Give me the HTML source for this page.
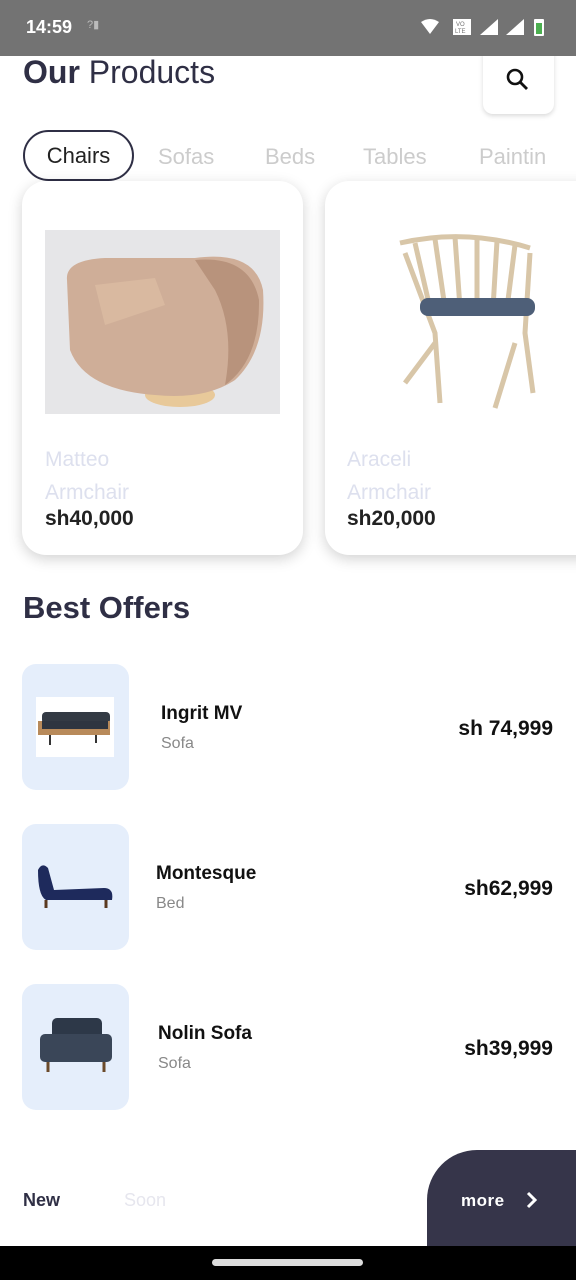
<!DOCTYPE html>
<html><head><meta charset="utf-8"><style>
*{margin:0;padding:0;box-sizing:border-box}
body{width:576px;height:1280px;overflow:hidden;background:#fff;font-family:"Liberation Sans",sans-serif;position:relative;color:#2f2f45}
.abs{position:absolute}
.status{left:0;top:0;width:576px;height:56px;background:#737373;color:#fff}
.card{background:#fff;border-radius:24px;box-shadow:0 4px 14px rgba(0,0,0,0.18)}
.thumb{left:22px;width:107px;height:126px;background:#e5eefb;border-radius:14px}
.name{font-weight:bold;font-size:19px;color:#111}
.sub{font-size:16px;color:#888}
.price{font-weight:bold;font-size:21px;color:#111;right:23px;text-align:right}
</style></head><body>
<div class="abs" style="left:483px;top:46px;width:71px;height:68px;border-radius:10px;background:#fff;box-shadow:0 2px 5px rgba(0,0,0,0.15)">
  <svg class="abs" style="left:22px;top:21px" width="26" height="26"><circle cx="10" cy="10" r="7" stroke="#111" stroke-width="2.6" fill="none"/><path d="M15 15 L22 22" stroke="#111" stroke-width="2.8"/></svg>
</div>
<div class="abs status">
  <div class="abs" style="left:26px;top:17px;font-size:18px;font-weight:bold">14:59</div>
  <div class="abs" style="left:87px;top:18px;font-size:11px;color:#bbb">?▮</div>
  <svg class="abs" style="left:420px;top:18px" width="130" height="20">
    <path d="M1 4 Q10 -2 19 4 L10 16 Z" fill="#fff"/>
    <rect x="33" y="1" width="18" height="16" fill="#fff"/><text x="36" y="8" font-size="6" fill="#737373">VO</text><text x="35" y="15" font-size="6" fill="#737373">LTE</text>
    <path d="M60 17 L78 17 L78 1 Z" fill="#fff"/><path d="M86 17 L104 17 L104 1 Z" fill="#fff"/>
    <rect x="114" y="1" width="10" height="17" rx="1" fill="#fff"/><rect x="116" y="5" width="6" height="11" fill="#4caf50"/>
  </svg>
</div>
<div class="abs" style="left:23px;top:54px;font-size:32px;color:#2f2f45"><b>Our</b> Products</div>
<div class="abs" style="left:23px;top:130px;width:111px;height:51px;border:2.5px solid #2f2f45;border-radius:26px;font-size:22px;text-align:center;line-height:47px;color:#222">Chairs</div>
<div class="abs" style="top:144px;font-size:22px;color:#ccc;left:158px">Sofas</div>
<div class="abs" style="top:144px;font-size:22px;color:#ccc;left:265px">Beds</div>
<div class="abs" style="top:144px;font-size:22px;color:#ccc;left:363px">Tables</div>
<div class="abs" style="top:144px;font-size:22px;color:#ccc;left:479px;white-space:nowrap;width:97px;overflow:hidden">Paintin</div>

<div class="abs card" style="left:22px;top:181px;width:281px;height:374px">
  <svg class="abs" style="left:23px;top:49px" width="235" height="184">
    <rect width="235" height="184" fill="#e6e6e8"/>
    <ellipse cx="135" cy="165" rx="35" ry="12" fill="#e8c99a"/>
    <path d="M22 50 Q20 30 60 28 L150 28 Q210 20 218 60 Q222 120 190 150 Q160 170 110 165 Q40 160 25 120 Z" fill="#cfae98"/>
    <path d="M150 30 Q205 25 214 70 Q215 130 180 155 Q190 100 170 60 Z" fill="#b8937c"/>
    <path d="M50 55 L110 48 L120 75 L60 95 Z" fill="#d9b9a0"/>
  </svg>
  <div class="abs" style="left:23px;top:262px;font-size:21px;color:#dde0ee;line-height:33px">Matteo<br>Armchair</div>
  <div class="abs" style="left:23px;top:326px;font-size:21px;font-weight:bold;color:#222">sh40,000</div>
</div>
<div class="abs card" style="left:325px;top:181px;width:290px;height:374px">
  <svg class="abs" style="left:60px;top:52px" width="180" height="180" stroke="#d8c6a8" stroke-width="5" fill="none">
    <path d="M15 10 Q80 -5 145 15"/><path d="M30 10 L45 75 M50 6 L60 75 M70 4 L75 75 M92 5 L92 75 M112 8 L108 75 M130 12 L122 75"/>
    <path d="M20 20 L50 100 L55 170 M145 20 L140 100 L148 160 M50 110 L20 150 M130 110 L110 175"/>
    <rect x="35" y="65" width="115" height="18" rx="8" fill="#4e5f78" stroke="none"/>
  </svg>
  <div class="abs" style="left:22px;top:262px;font-size:21px;color:#dde0ee;line-height:33px">Araceli<br>Armchair</div>
  <div class="abs" style="left:22px;top:326px;font-size:21px;font-weight:bold;color:#222">sh20,000</div>
</div>

<div class="abs" style="left:23px;top:590px;font-size:31px;font-weight:bold;color:#2f2f45">Best Offers</div>

<div class="abs thumb" style="top:664px"><svg class="abs" style="left:14px;top:33px" width="78" height="60"><rect width="78" height="60" fill="#fff"/><rect x="6" y="15" width="68" height="12" rx="4" fill="#333a44"/><rect x="2" y="24" width="72" height="14" fill="#b88a5a"/><rect x="6" y="24" width="66" height="8" fill="#2e3540"/><path d="M14 38 L14 48 M60 38 L60 46" stroke="#333" stroke-width="2"/></svg></div>
<div class="abs name" style="left:161px;top:703px">Ingrit MV</div>
<div class="abs sub" style="left:161px;top:735px">Sofa</div>
<div class="abs price" style="top:717px">sh 74,999</div>

<div class="abs thumb" style="top:824px"><svg class="abs" style="left:12px;top:36px" width="82" height="54"><path d="M4 10 Q8 2 14 8 L20 30 L70 28 Q80 28 78 40 L12 40 Q4 36 4 10Z" fill="#1e2a5c"/><path d="M12 40 L12 48 M72 40 L72 48" stroke="#5a3a20" stroke-width="3"/></svg></div>
<div class="abs name" style="left:156px;top:863px">Montesque</div>
<div class="abs sub" style="left:156px;top:895px">Bed</div>
<div class="abs price" style="top:877px">sh62,999</div>

<div class="abs thumb" style="top:984px"><svg class="abs" style="left:14px;top:30px" width="80" height="64"><rect x="16" y="4" width="50" height="26" rx="5" fill="#2d3848"/><rect x="4" y="20" width="72" height="28" rx="5" fill="#3a4658"/><path d="M12 48 L12 58 M68 48 L68 58" stroke="#6b4a2a" stroke-width="3"/></svg></div>
<div class="abs name" style="left:158px;top:1023px">Nolin Sofa</div>
<div class="abs sub" style="left:158px;top:1055px">Sofa</div>
<div class="abs price" style="top:1037px">sh39,999</div>

<div class="abs" style="left:23px;top:1190px;font-size:18px;font-weight:bold;color:#2f2f45">New</div>
<div class="abs" style="left:124px;top:1190px;font-size:18px;color:#e6e6ee">Soon</div>
<div class="abs" style="left:427px;top:1150px;width:149px;height:100px;background:#36354a;border-top-left-radius:50px">
  <div class="abs" style="left:34px;top:41px;font-size:17px;font-weight:bold;color:#fff;letter-spacing:0.5px">more</div>
  <svg class="abs" style="left:98px;top:40px" width="14" height="20"><path d="M3 3 L10 10 L3 17" stroke="#fff" stroke-width="3" fill="none"/></svg>
</div>
<div class="abs" style="left:0;top:1246px;width:576px;height:34px;background:#000"></div>
<div class="abs" style="left:212px;top:1259px;width:151px;height:7px;border-radius:4px;background:#ddd"></div>
</body></html>
